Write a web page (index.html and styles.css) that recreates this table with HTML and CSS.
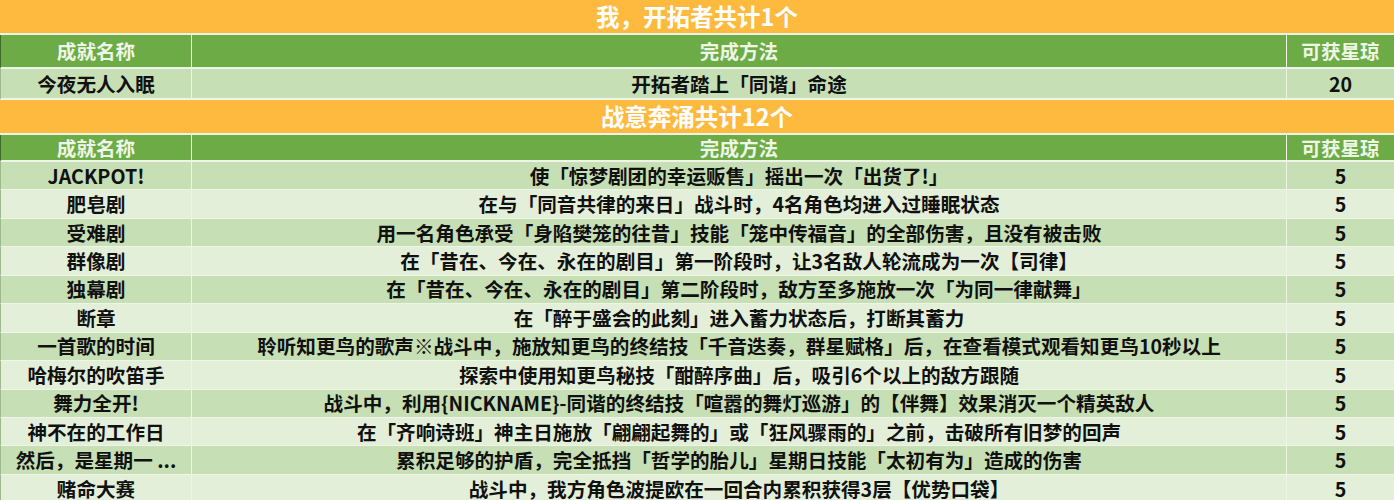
FILE: index.html
```html
<!DOCTYPE html>
<html lang="zh-CN">
<head>
<meta charset="utf-8">
<link rel="stylesheet" href="styles.css">
</head>
<body>
<div class="sheet">
  <div class="title">我，开拓者共计1个</div>
  <div class="row head"><div>成就名称</div><div>完成方法</div><div>可获星琼</div></div>
  <div class="row data first odd"><div>今夜无人入眠</div><div>开拓者踏上「同谐」命途</div><div>20</div></div>
  <div class="title">战意奔涌共计12个</div>
  <div class="row head head2"><div>成就名称</div><div>完成方法</div><div>可获星琼</div></div>
  <div class="row data odd"><div>JACKPOT!</div><div>使「惊梦剧团的幸运贩售」摇出一次「出货了!」</div><div>5</div></div>
  <div class="row data even"><div>肥皂剧</div><div>在与「同音共律的来日」战斗时，4名角色均进入过睡眠状态</div><div>5</div></div>
  <div class="row data odd"><div>受难剧</div><div>用一名角色承受「身陷樊笼的往昔」技能「笼中传福音」的全部伤害，且没有被击败</div><div>5</div></div>
  <div class="row data even"><div>群像剧</div><div>在「昔在、今在、永在的剧目」第一阶段时，让3名敌人轮流成为一次【司律】</div><div>5</div></div>
  <div class="row data odd"><div>独幕剧</div><div>在「昔在、今在、永在的剧目」第二阶段时，敌方至多施放一次「为同一律献舞」</div><div>5</div></div>
  <div class="row data even"><div>断章</div><div>在「醉于盛会的此刻」进入蓄力状态后，打断其蓄力</div><div>5</div></div>
  <div class="row data odd"><div>一首歌的时间</div><div>聆听知更鸟的歌声※战斗中，施放知更鸟的终结技「千音迭奏，群星赋格」后，在查看模式观看知更鸟10秒以上</div><div>5</div></div>
  <div class="row data even"><div>哈梅尔的吹笛手</div><div>探索中使用知更鸟秘技「酣醉序曲」后，吸引6个以上的敌方跟随</div><div>5</div></div>
  <div class="row data odd"><div>舞力全开!</div><div>战斗中，利用{NICKNAME}-同谐的终结技「喧嚣的舞灯巡游」的【伴舞】效果消灭一个精英敌人</div><div>5</div></div>
  <div class="row data even"><div>神不在的工作日</div><div>在「齐响诗班」神主日施放「翩翩起舞的」或「狂风骤雨的」之前，击破所有旧梦的回声</div><div>5</div></div>
  <div class="row data odd"><div>然后，是星期一 ...</div><div>累积足够的护盾，完全抵挡「哲学的胎儿」星期日技能「太初有为」造成的伤害</div><div>5</div></div>
  <div class="row data even"><div>赌命大赛</div><div>战斗中，我方角色波提欧在一回合内累积获得3层【优势口袋】</div><div>5</div></div>
</div>
</body>
</html>
```

FILE: styles.css
```css
html, body {
  margin: 0;
  padding: 0;
  background: #e3efd9;
}
body {
  font-family: "Noto Sans CJK SC", "Noto Sans", sans-serif;
  font-weight: 700;
  color: #111;
  overflow: hidden;
}
.sheet {
  width: 1394px;
  display: flex;
  flex-direction: column;
}
.title {
  box-sizing: border-box;
  height: 35px;
  background: #fdba3e;
  color: #fff;
  font-size: 23.5px;
  line-height: 33px;
  text-align: center;
  border-bottom: 2px solid #eef3ea;
}
.row {
  box-sizing: border-box;
  display: grid;
  grid-template-columns: 190px 1095px 1fr;
  border-bottom: 1px solid #eef4e8;
}
.row > div {
  display: flex;
  align-items: center;
  justify-content: center;
  white-space: nowrap;
  font-size: 19.6px;
  line-height: 20px;
}
.row > div + div {
  border-left: 1px solid #eef4e8;
}
.head {
  height: 34px;
  background: #6cab45;
  color: #eef6e6;
  border-bottom-width: 2px;
  border-left: 1px solid #3f6e2a;
}
.head2 {
  height: 27px;
}
.data {
  height: 28.45px;
  border-left: 1px solid #9bb98a;
}
.data.first {
  height: 31px;
  border-bottom-width: 2px;
}
.odd {
  background: #c6dfb4;
}
.even {
  background: #e3efd9;
}
```
